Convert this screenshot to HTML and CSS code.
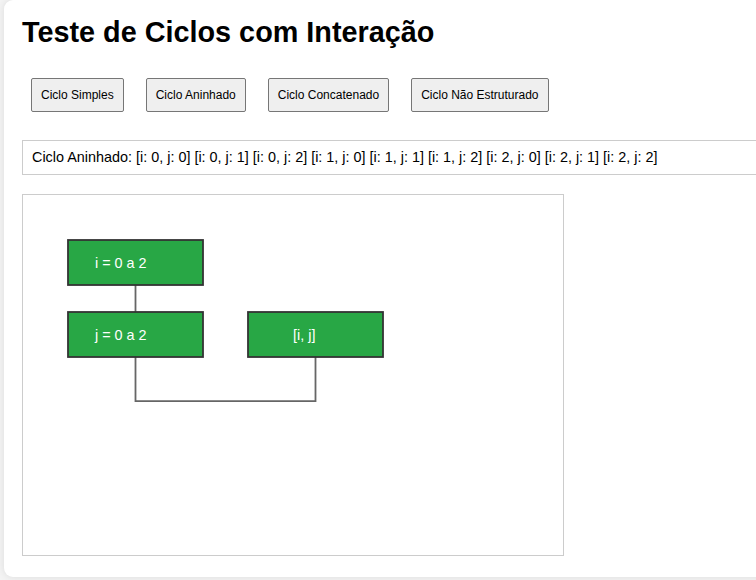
FILE: index.html
```html
<!DOCTYPE html>
<html lang="pt">
<head>
<meta charset="utf-8">
<title>Teste de Ciclos com Interação</title>
<link rel="stylesheet" href="styles.css">
</head>
<body>
<div class="card">
  <h1 class="title">Teste de Ciclos com Interação</h1>
  <div class="controls">
    <button class="btn">Ciclo Simples</button>
    <button class="btn">Ciclo Aninhado</button>
    <button class="btn">Ciclo Concatenado</button>
    <button class="btn">Ciclo Não Estruturado</button>
  </div>
  <div class="output">Ciclo Aninhado: [i: 0, j: 0] [i: 0, j: 1] [i: 0, j: 2] [i: 1, j: 0] [i: 1, j: 1] [i: 1, j: 2] [i: 2, j: 0] [i: 2, j: 1] [i: 2, j: 2]</div>
  <svg class="diagram" width="540" height="360" viewBox="0 0 600 400" xmlns="http://www.w3.org/2000/svg">
    <line x1="125" y1="100" x2="125" y2="130" class="link"/>
    <polyline points="125,180 125,229 325,229 325,180" class="link"/>
    <rect x="50" y="50" width="150" height="50" class="node"/>
    <text x="80" y="75" class="label">i = 0 a 2</text>
    <rect x="50" y="130" width="150" height="50" class="node"/>
    <text x="80" y="155" class="label">j = 0 a 2</text>
    <rect x="250" y="130" width="150" height="50" class="node"/>
    <text x="300" y="155" class="label">[i, j]</text>
  </svg>
</div>
</body>
</html>
```
FILE: styles.css
```css
html, body {
  margin: 0;
  padding: 0;
}
body {
  background: #f4f4f4;
  font-family: "Liberation Sans", Arial, sans-serif;
  overflow: hidden;
  height: 580px;
  padding-left: 4px;
}
.card {
  background: #fff;
  border-radius: 9px;
  box-shadow: 0 0 9px rgba(0, 0, 0, 0.1);
  width: 900px;
  padding: 16px 18px 21px;
  box-sizing: border-box;
}
.title {
  margin: 0 0 20px;
  font-size: 28.8px;
  font-weight: bold;
  color: #000;
  line-height: normal;
}
.controls {
  display: flex;
  gap: 4px;
}
.btn {
  margin: 9px;
  padding: 9px 9px;
  font-family: "Liberation Sans", Arial, sans-serif;
  font-size: 12px;
  line-height: 14px;
  color: #000;
  background: #efefef;
  border: 1px solid #767676;
  border-radius: 2px;
}
.output {
  margin-top: 19px;
  padding: 8px 9px;
  border: 1px solid #ccc;
  font-size: 14.4px;
  line-height: 17px;
  color: #000;
  white-space: nowrap;
}
.diagram {
  display: block;
  margin-top: 19px;
  border: 1px solid #ccc;
  background: #fff;
}
.node {
  fill: #28a745;
  stroke: #333;
  stroke-width: 2;
}
.link {
  fill: none;
  stroke: #666;
  stroke-width: 2;
}
.label {
  fill: #fff;
  font-family: "Liberation Sans", Arial, sans-serif;
  font-size: 16px;
  dominant-baseline: central;
}
```
